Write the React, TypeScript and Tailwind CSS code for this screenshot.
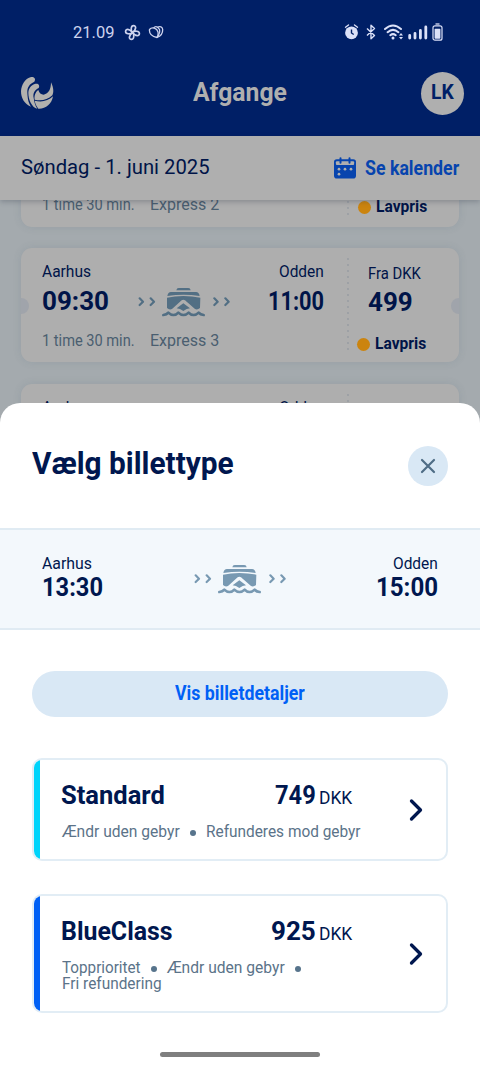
import { useLayoutEffect, useRef, useState } from "react";
import type { ReactNode } from "react";

/** Single line of text, condensed horizontally to fill the width given in className. */
function Label({ className, children }: { className: string; children: ReactNode }) {
  const outer = useRef<HTMLSpanElement>(null);
  const inner = useRef<HTMLSpanElement>(null);
  const [scale, setScale] = useState(1);
  useLayoutEffect(() => {
    if (outer.current && inner.current && inner.current.offsetWidth > 0) {
      setScale(outer.current.offsetWidth / inner.current.offsetWidth);
    }
  }, []);
  return (
    <span ref={outer} className={`inline-block shrink-0 whitespace-nowrap ${className}`}>
      <span ref={inner} className="inline-block origin-left" style={{ transform: `scaleX(${scale})` }}>
        {children}
      </span>
    </span>
  );
}

function FerryRoute({ className }: { className: string }) {
  return (
    <svg viewBox="0 0 276 87" className={`h-[29px] w-[92px] shrink-0 ${className}`} fill="currentColor">
      <g fill="none" stroke="currentColor" strokeWidth="6.500" strokeLinecap="round" strokeLinejoin="round">
        <path d="M5 31l10 10-10 10M38 31l10 10-10 10M229 31l10 10-10 10M262 31l10 10-10 10" />
        <path
          strokeWidth="8"
          d="M76 81Q86 80 91 74Q98 81 106 81Q115 81 121 74Q128 81 136.500 81Q145 81 152 74Q158 81 167 81Q175 81 182 74Q187 80 197 81"
        />
      </g>
      <path d="M122 0h29q6 0 7 7h-43q1-7 7-7z" />
      <path d="M99 12h75q9 0 11 12Q137 16 88 24q2-12 11-12z" />
      <path d="M87 29Q110 24 136 24Q162 24 187 29L186 60Q178 67 171 63L141 37q-5-4-10 0L102 63Q94 67 87 60Z" />
      <path d="M136 46L156 61Q146 62 136 69Q126 62 116 61Z" />
    </svg>
  );
}

function Logo() {
  return (
    <svg viewBox="0 0 105 102" className="h-[34px] w-[35px] text-[#b2b1ae]" fill="currentColor">
      <path d="M31 4C42 0 49 9 43 17C28 24 21 34 22 50C23 66 24 78 33 92C13 84 3 66 3 46C4 26 16 8 31 4Z" />
      <path d="M44 24C54 20 61 28 56 36C44 42 38 52 41 66C43 80 46 90 52 98C35 94 25 70 25 50C26 36 34 28 44 24Z" />
      <path d="M93 19C102 38 101 50 97 58C82 73 62 75 44 71C42 60 46 48 55 42Q59 56 71 56C86 53 93 40 93 19Z" />
      <path d="M44 74C64 79 84 76 99 61C95 85 77 99 55 98C49 90 46 84 44 74Z" />
    </svg>
  );
}

function StatusBar() {
  return (
    <div className="flex h-[20px] items-center pl-[73px] text-[#cdd3ee]">
      <Label className="mt-[2px] w-[41px] text-[16.500px] leading-[20px]">21.09</Label>
      <svg viewBox="0 0 16 16" className="ml-[10px] size-[17px]" fill="none" stroke="currentColor" strokeWidth="1.600" strokeLinejoin="round">
        <path d="M8 8C6 6 6.500 1.500 9 1.500S12 5 8 8Z" />
        <path d="M8 8C10 6 14.500 6.500 14.500 9S11 12 8 8Z" />
        <path d="M8 8C10 10 9.500 14.500 7 14.500S4 11 8 8Z" />
        <path d="M8 8C6 10 1.500 9.500 1.500 7S5 4 8 8Z" />
      </svg>
      <svg viewBox="0 0 16 14" className="ml-[7px] h-[14px] w-[16px]" fill="none" stroke="currentColor" strokeWidth="1.300" strokeLinejoin="round">
        <path d="M9 12.500C4 11.500 1 8.500 1.500 4.500C4 1.500 9 3 10 7Q10.500 10 9 12.500Z" />
        <path d="M5.500 3C7.500 0.800 10 1.500 11.500 4.500Q12.500 8 9 12.500" />
        <path d="M9.500 2.200C12 1 14.500 2 14.700 4.500C14.800 8.500 12 11.500 9 12.500" />
      </svg>

      <div className="ml-[180px] flex items-center text-[#dce1f8]">
        <svg viewBox="0 0 14 16" className="h-[16px] w-[15px]">
          <circle cx="7" cy="8.800" r="6.400" fill="currentColor" />
          <path d="M1 3.200L4 1M13 3.200L10 1" stroke="currentColor" strokeWidth="1.400" strokeLinecap="round" />
          <path d="M7 5.500V9l2.200 1.500" stroke="#001f66" strokeWidth="1.400" fill="none" />
        </svg>
        <svg viewBox="0 0 10 16" className="ml-[7px] h-[16px] w-[10px]" fill="none" stroke="currentColor" strokeWidth="1.400" strokeLinejoin="round">
          <path d="M1 4.500L8.500 11.500L5 14.800V1.200L8.500 4.500L1 11.500" />
        </svg>
        <svg viewBox="0 0 20 16" className="ml-[8px] h-[16px] w-[20px]">
          <g fill="none" stroke="currentColor" strokeWidth="2" strokeLinecap="round">
            <path d="M1 5Q9 -2 17 5M3.600 8.200Q9 3.500 14.400 8.200M6.300 11.200Q9 9 11.700 11.200" />
          </g>
          <circle cx="9" cy="14" r="1.500" fill="currentColor" />
          <path d="M15 11.500l2-2.500 2 2.500zM15 13l2 2.500 2-2.500z" fill="currentColor" />
        </svg>
        <svg viewBox="0 0 20 15" className="ml-[4px] h-[15px] w-[20px]" stroke="currentColor" strokeWidth="2.800" strokeLinecap="round">
          <path d="M1.700 10.500v2.500M7 8.500v4.500M12.400 5.500v7.500M17.800 2v11" />
        </svg>
        <svg viewBox="0 0 11 18" className="ml-[4px] h-[18px] w-[11px]">
          <path d="M3.500 1h4" stroke="currentColor" strokeWidth="1.300" />
          <rect x="1" y="2.800" width="9" height="14.400" rx="2" fill="none" stroke="currentColor" strokeWidth="1.200" />
          <rect x="2.600" y="5.800" width="5.800" height="9.900" rx="0.800" fill="currentColor" />
        </svg>
      </div>
    </div>
  );
}

function CalendarIcon() {
  return (
    <svg viewBox="0 0 22 22" className="h-[22px] w-[22px] text-[#0744ae]">
      <rect x="0" y="2.300" width="22" height="19.200" rx="2.800" fill="currentColor" />
      <rect x="1.900" y="4.300" width="18.200" height="3.600" rx="1" fill="#afafaf" />
      <path d="M6.500 1.200v4.600M15.500 1.200v4.600" stroke="currentColor" strokeWidth="2" strokeLinecap="round" />
      <g fill="#afafaf">
        <circle cx="5" cy="12.200" r="1.350" />
        <circle cx="11" cy="12.200" r="1.350" />
        <circle cx="17" cy="12.200" r="1.350" />
        <circle cx="5" cy="17.200" r="1.350" />
      </g>
    </svg>
  );
}

const cardStyle =
  "relative flex w-[438px] shrink-0 overflow-hidden bg-[#aeaeae] text-[#001448] shadow-[0_0_8px_rgba(60,80,110,0.12)]";

function Trip({ ship }: { ship: string }) {
  return (
    <div className="flex h-[20px] gap-[15px] text-[16px] leading-[20px] text-[#4a5e70]">
      <Label className="w-[93px]">1 time 30 min.</Label>
      <Label className="w-[69px]">{ship}</Label>
    </div>
  );
}

function LowPrice() {
  return (
    <div className="-ml-[11px] flex h-[20px] items-center gap-[5px] text-[16.500px] leading-[20px] font-bold">
      <span className="size-[13px] rounded-full bg-[#cb840f]" />
      <Label className="w-[51px]">Lavpris</Label>
    </div>
  );
}

function Cities({ from, to }: { from: string; to: string }) {
  return (
    <div className="flex h-[20px] w-[282px] items-center justify-between text-[16.500px] leading-[20px]">
      <Label className="w-[49px]">{from}</Label>
      <Label className="w-[45px]">{to}</Label>
    </div>
  );
}

/** The dotted tear line between the journey and its price. */
function TearLine({ className }: { className: string }) {
  return (
    <svg viewBox="0 0 4 96" preserveAspectRatio="xMidYMin slice" className={`w-[4px] ${className}`}>
      <path d="M2 1V95" stroke="#989da3" strokeWidth="2" strokeLinecap="round" strokeDasharray="0 6" />
    </svg>
  );
}

export default function App() {
  return (
    <div className="relative flex h-[1067px] w-[480px] flex-col overflow-hidden bg-[#a4aaae] font-['Roboto','Liberation_Sans',sans-serif]">
      <header className="flex h-[136px] shrink-0 flex-col bg-[#001f66] pt-[22px]">
        <StatusBar />
        <div className="mt-[29px] flex h-[44px] items-center justify-between pr-[16px] pl-[20px]">
          <div className="w-[43px]">
            <Logo />
          </div>
          <h1 className="mr-[5px] flex text-[25px] leading-[30px] font-bold text-[#afafaf]">
            <Label className="w-[94px]">Afgange</Label>
          </h1>
          <span className="flex size-[43px] items-center justify-center rounded-full bg-[#afafaf] text-[21px] font-bold text-[#001f66]">
            <Label className="w-[23px]">LK</Label>
          </span>
        </div>
      </header>

      <div className="relative z-10 flex h-[64px] shrink-0 items-center justify-between bg-[#afafaf] pr-[21px] pl-[21px] shadow-[0_2px_5px_rgba(30,40,60,0.25)]">
        <Label className="mb-[2px] w-[189px] text-[21px] leading-[26px] text-[#001448]">Søndag - 1. juni 2025</Label>
        <span className="flex items-center gap-[9px] text-[20px] leading-[26px] font-bold text-[#0744ae]">
          <CalendarIcon />
          <Label className="mb-[1px] w-[94px]">Se kalender</Label>
        </span>
      </div>

      <main className="-mt-[5px] flex flex-col items-center">
        <article className={`h-[32px] rounded-b-[11px] ${cardStyle}`}>
          <div className="w-[325px] pl-[21px]">
            <Trip ship="Express 2" />
          </div>
          <TearLine className="h-[20px]" />
          <div className="pt-[2px] pl-[19px]">
            <LowPrice />
          </div>
        </article>

        <article className={`mt-[21px] h-[114px] rounded-[11px] ${cardStyle}`}>
          <span className="absolute top-[50px] -left-[8px] size-[16px] rounded-full bg-[#a0a4ab]" />
          <span className="absolute top-[50px] -right-[8px] size-[16px] rounded-full bg-[#a0a4ab]" />
          <div className="w-[325px] pt-[14px] pl-[21px]">
            <Cities from="Aarhus" to="Odden" />
            <div className="mt-[5px] mb-[16px] flex h-[28px] w-[282px] items-center text-[26px] leading-[28px] font-bold">
              <Label className="w-[67px]">09:30</Label>
              <FerryRoute className="mt-[3px] ml-[29px] text-[#526f84]" />
              <Label className="ml-auto w-[56px]">11:00</Label>
            </div>
            <Trip ship="Express 3" />
          </div>
          <TearLine className="mt-[10px] h-[96px]" />
          <div className="flex flex-col pt-[16px] pl-[18px]">
            <Label className="h-[20px] w-[53px] text-[16.500px] leading-[20px]">Fra DKK</Label>
            <Label className="mt-[4px] mb-[18px] h-[28px] w-[45px] text-[26px] leading-[28px] font-bold">499</Label>
            <LowPrice />
          </div>
        </article>

        <article className={`mt-[22px] h-[60px] rounded-t-[11px] ${cardStyle}`}>
          <div className="w-[325px] pt-[14px] pl-[21px]">
            <Cities from="Aarhus" to="Odden" />
          </div>
          <TearLine className="mt-[10px] h-[50px]" />
        </article>
      </main>

      <section className="absolute inset-x-0 top-[403px] bottom-0 z-20 flex flex-col items-center rounded-t-[20px] bg-white">
        <div className="flex h-[125px] w-[416px] shrink-0 items-center justify-between">
          <h2 className="mb-[3px] flex text-[31px] leading-[36px] font-bold text-[#00174f]">
            <Label className="w-[202px]">Vælg billettype</Label>
          </h2>
          <button className="flex size-[40px] items-center justify-center rounded-full bg-[#d9e8f5]" aria-label="Luk">
            <svg viewBox="0 0 16 16" className="size-[16px]" stroke="#4f6d86" strokeWidth="2.200" strokeLinecap="round">
              <path d="M2 2L14 14M14 2L2 14" />
            </svg>
          </button>
        </div>

        <div className="flex h-[102px] w-full shrink-0 items-center justify-between border-y-2 border-[#e0ebf3] bg-[#f3f8fc] px-[42px] text-[#00174f]">
          <div className="mb-[3px] flex w-[92px] flex-col">
            <Label className="h-[20px] w-[50px] text-[16.500px] leading-[20px]">Aarhus</Label>
            <Label className="-mt-px h-[28px] w-[61px] text-[26px] leading-[28px] font-bold">13:30</Label>
          </div>
          <FerryRoute className="text-[#7899b2]" />
          <div className="mb-[3px] flex w-[92px] flex-col items-end">
            <Label className="h-[20px] w-[45px] text-[16.500px] leading-[20px]">Odden</Label>
            <Label className="-mt-px h-[28px] w-[62px] text-[26px] leading-[28px] font-bold">15:00</Label>
          </div>
        </div>

        <button className="mt-[41px] flex h-[46px] w-[416px] shrink-0 items-center justify-center rounded-full bg-[#d9e8f5] text-[19.500px] leading-[24px] font-bold text-[#0060f5]">
          <Label className="w-[130px]">Vis billetdetaljer</Label>
        </button>

        <Ticket
          accent="bg-[#00d4fb]"
          className="mt-[41px] h-[103px] shrink-0"
          title={<Label className="w-[104px]">Standard</Label>}
          price={<Label className="w-[41px]">749</Label>}
        >
          <Label className="w-[118px]">Ændr uden gebyr</Label>
          <Dot />
          <Label className="w-[155px]">Refunderes mod gebyr</Label>
        </Ticket>

        <Ticket
          accent="bg-[#0060f5]"
          className="mt-[33px] h-[119px] shrink-0"
          title={<Label className="w-[112px]">BlueClass</Label>}
          price={<Label className="w-[45px]">925</Label>}
        >
          <Label className="w-[79px]">Topprioritet</Label>
          <Dot />
          <Label className="w-[118px]">Ændr uden gebyr</Label>
          <Dot />
          <Label className="w-[100px]">Fri refundering</Label>
        </Ticket>

        <span className="mt-[39px] h-[5px] w-[160px] shrink-0 rounded-full bg-[#7f7f7f]" />
      </section>
    </div>
  );
}

const Dot = () => <span className="mt-[1px] size-[6px] rounded-full bg-[#57748c]" />;

function Ticket({ accent, title, price, className, children }: { accent: string; title: ReactNode; price: ReactNode; className: string; children: ReactNode }) {
  return (
    <button className={`relative flex w-[416px] items-center overflow-hidden rounded-[10px] border-2 border-[#e2edf5] bg-white text-left ${className}`}>
      <span className={`-ml-px w-[7px] self-stretch ${accent}`} />
      <span className="ml-[21px] flex w-[305px] flex-col self-stretch pt-[20px]">
        <span className="flex h-[30px] w-[291px] items-baseline justify-between text-[26px] leading-[30px] font-bold text-[#00174f]">
          {title}
          <span className="flex items-baseline gap-[3px]">
            {price}
            <Label className="w-[33px] text-[19px] leading-[20px] font-normal">DKK</Label>
          </span>
        </span>
        <span className="mt-[14px] ml-px flex flex-wrap items-center gap-x-[10px] text-[16px] leading-[16px] text-[#5b7389]">{children}</span>
      </span>
      <svg viewBox="0 0 14 24" className="ml-[43px] h-[24px] w-[14px]" fill="none" stroke="#00174f" strokeWidth="3.300" strokeLinecap="round" strokeLinejoin="round">
        <path d="M2.500 3L11.500 12L2.500 21" />
      </svg>
    </button>
  );
}
